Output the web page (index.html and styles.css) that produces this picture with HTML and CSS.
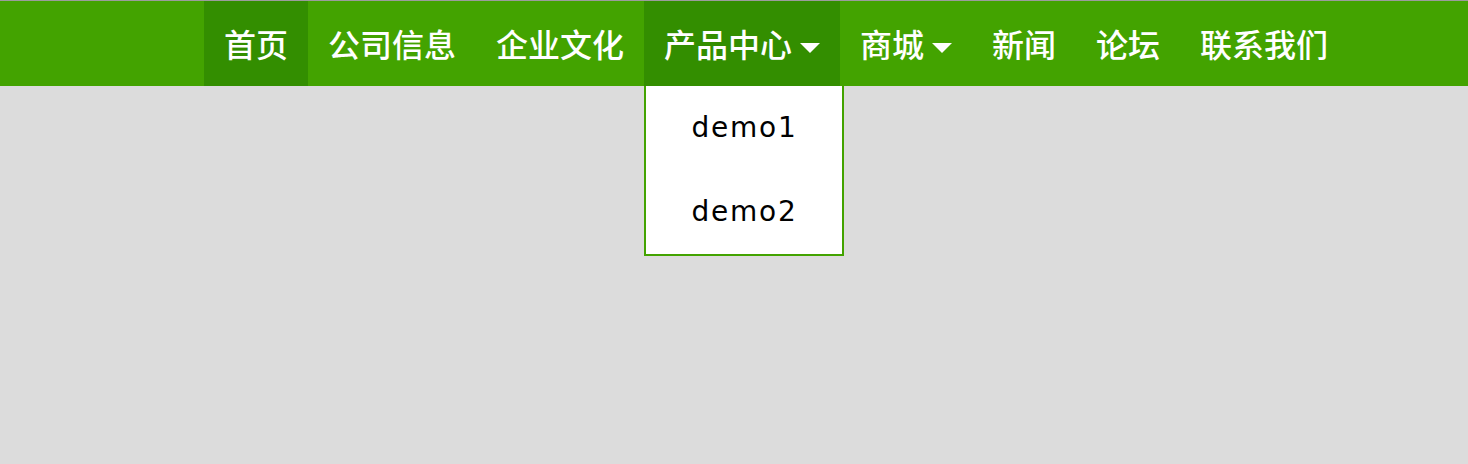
FILE: index.html
```html
<!DOCTYPE html>
<html lang="zh-CN">
<head>
<meta charset="utf-8">
<title>导航</title>
<link rel="stylesheet" href="styles.css">
</head>
<body>
<div class="topline"></div>
<nav class="nav">
  <ul class="menu">
    <li class="item active"><a href="#">首页</a></li>
    <li class="item"><a href="#">公司信息</a></li>
    <li class="item"><a href="#">企业文化</a></li>
    <li class="item open has-sub"><a href="#">产品中心<span class="caret"></span></a>
      <ul class="sub">
        <li><a href="#">demo1</a></li>
        <li><a href="#">demo2</a></li>
      </ul>
    </li>
    <li class="item has-sub"><a href="#">商城<span class="caret"></span></a></li>
    <li class="item"><a href="#">新闻</a></li>
    <li class="item"><a href="#">论坛</a></li>
    <li class="item"><a href="#">联系我们</a></li>
  </ul>
</nav>
</body>
</html>
```

FILE: styles.css
```css
html, body {
  margin: 0;
  padding: 0;
  background: #dcdcdc;
  height: 100%;
}
ul { margin: 0; padding: 0; list-style: none; }
a { text-decoration: none; color: inherit; }

.topline {
  height: 1px;
  background: #9c9c9c;
}
.nav {
  background: #43a300;
  height: 85px;
}
.menu {
  display: flex;
  padding-left: 204px;
  height: 85px;
}
.item {
  position: relative;
  height: 85px;
}
.item > a {
  display: flex;
  align-items: center;
  height: 85px;
  padding: 0 20px;
  color: #fff;
  font-family: "Noto Sans CJK SC", "Liberation Sans", sans-serif;
  font-size: 32px;
  font-weight: 500;
  line-height: 85px;
}
.item.active, .item.open {
  background: #338e00;
}
.caret {
  display: inline-block;
  width: 0;
  height: 0;
  margin-left: 8px;
  margin-top: 9px;
  border-left: 10px solid transparent;
  border-right: 10px solid transparent;
  border-top: 10px solid #fff;
}
.sub {
  position: absolute;
  top: 100%;
  left: 0;
  width: 196px;
  background: #fff;
  border: 2px solid #43a300;
  border-top: 0;
}
.sub a {
  display: block;
  height: 84px;
  line-height: 84px;
  text-align: center;
  color: #000;
  font-family: "DejaVu Sans", sans-serif;
  font-size: 28px;
  letter-spacing: 1.8px;
  text-indent: 1px;
}
```
